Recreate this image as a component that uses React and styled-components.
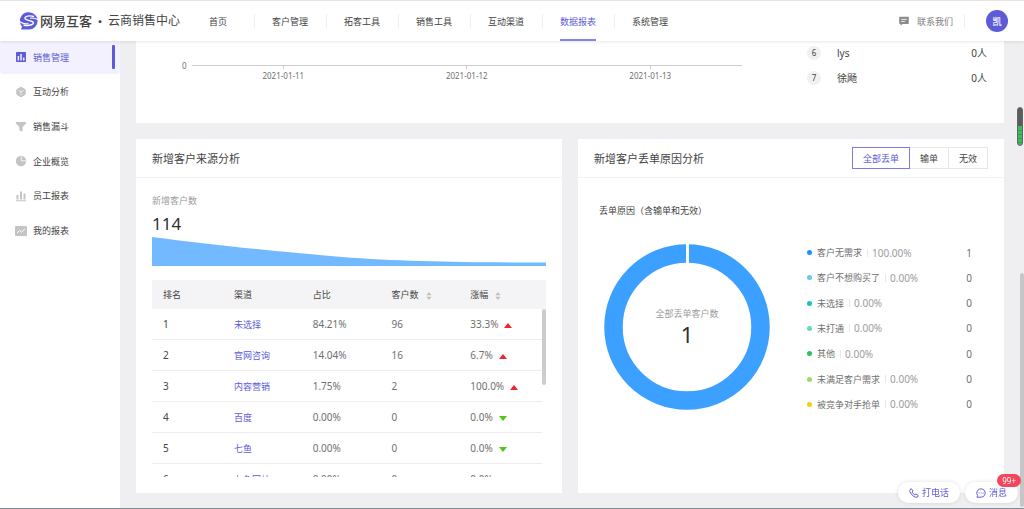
import React from 'react';
import styled, { createGlobalStyle } from 'styled-components';

const colors = {
  primary: '#5d5bd8',
  primaryBg: '#f2f1fd',
  text: '#444444',
  textStrong: '#2f2f2f',
  textMid: '#707070',
  textLight: '#9c9c9c',
  line: '#eeeeee',
  page: '#efeff1',
  blue: '#3ba0ff',
  area: '#73b9ff',
  up: '#f5222d',
  down: '#52c41a',
};

const navItems = ['首页', '客户管理', '拓客工具', '销售工具', '互动渠道', '数据报表', '系统管理'];

const menuItems = [
  { label: '销售管理', icon: 'sales' },
  { label: '互动分析', icon: 'cube' },
  { label: '销售漏斗', icon: 'funnel' },
  { label: '企业概览', icon: 'pie' },
  { label: '员工报表', icon: 'bars' },
  { label: '我的报表', icon: 'trend' },
];

const dates = ['2021-01-11', '2021-01-12', '2021-01-13'];

const ranks = [
  { rank: 6, name: 'lys', value: '0人' },
  { rank: 7, name: '徐飏', value: '0人' },
];

const sources = [
  { name: '未选择', ratio: '84.21%', count: 96, change: '33.3%', up: true },
  { name: '官网咨询', ratio: '14.04%', count: 16, change: '6.7%', up: true },
  { name: '内容营销', ratio: '1.75%', count: 2, change: '100.0%', up: true },
  { name: '百度', ratio: '0.00%', count: 0, change: '0.0%', up: false },
  { name: '七鱼', ratio: '0.00%', count: 0, change: '0.0%', up: false },
  { name: '七鱼网站', ratio: '0.00%', count: 0, change: '0.0%', up: false },
];

const reasons = [
  { name: '客户无需求', ratio: '100.00%', count: 1, color: '#1890ff' },
  { name: '客户不想购买了', ratio: '0.00%', count: 0, color: '#6ac8ea' },
  { name: '未选择', ratio: '0.00%', count: 0, color: '#13c2c2' },
  { name: '未打通', ratio: '0.00%', count: 0, color: '#66d9b0' },
  { name: '其他', ratio: '0.00%', count: 0, color: '#2fc25b' },
  { name: '未满足客户需求', ratio: '0.00%', count: 0, color: '#9ddb67' },
  { name: '被竞争对手抢单', ratio: '0.00%', count: 0, color: '#facc14' },
];

const MenuIcon = ({ name }) => (
  <svg width="12" height="12" viewBox="0 0 12 12" fill="currentColor">
    {name === 'sales' && (
      <path fillRule="evenodd" d="M1.8 1h8.4q.8 0 .8.8v8.4q0 .8-.8.8H1.8q-.8 0-.8-.8V1.8Q1 1 1.8 1zM2.6 5v4.4h1.5V5zM5.3 3v6.4h1.5V3zM8 6.5v2.9h1.5V6.5z" />
    )}
    {name === 'cube' && (
      <>
        <path d="M6 1.2l4.2 2.4v4.8L6 10.800 1.800 8.400V3.600z" stroke="currentColor" strokeLinejoin="round" />
        <path d="M3.400 4.300L6 5.900l2.600-1.600M6 5.900V9" stroke="#fff" fill="none" strokeWidth=".7" />
      </>
    )}
    {name === 'funnel' && <path d="M.8 1h10.4v1.2L7.6 6v4.8L4.4 9.3V6L.8 2.2z" />}
    {name === 'pie' && (
      <>
        <circle cx="6" cy="6" r="5.2" />
        <path d="M6.300 1.200v4.600h4.600" stroke="#fff" fill="none" strokeWidth=".8" />
      </>
    )}
    {name === 'bars' && (
      <path d="M1.500 5h2v4.500h-2zM5 1.500h2v8H5zM8.500 3.500h2v6h-2zM1 10.300h10v.9H1z" />
    )}
    {name === 'trend' && (
      <>
        <rect x="0" y="1" width="12" height="10" rx="1" />
        <path d="M2 8l2.600-2.600 2 1.700L10 3.800" stroke="#fff" fill="none" />
      </>
    )}
  </svg>
);

const Logo = () => (
  <svg width="18" height="18" viewBox="0 0 18 18">
    <path d="M9 .3a8.6 8.6 0 1 1 0 17.2H1.8q-1 0-.6-1l1-1.8A8.6 8.6 0 0 1 9 .3z" fill={colors.primary} />
    <path d="M14 4.500Q9 3 5.500 5 4 6.800 7 7.800l5.500 1.800q2 1.400-.5 2.900Q8 14.300 3.500 13" fill="none" stroke="#fff" strokeWidth="1.400" />
    <path d="M18 7.600Q14 5.400 10 6.200M0 9.800Q4 12.500 8.500 11.600" fill="none" stroke="#fff" strokeWidth="1.100" />
  </svg>
);

const App = () => {
  return (
    <>
      <GlobalStyle />
      <Page>
        <Header>
          <Brand>
            <Logo />
            <BrandName>网易互客</BrandName>
            <BrandDot>·</BrandDot>
            <BrandProduct>云商销售中心</BrandProduct>
          </Brand>
          <Nav>
            {navItems.map((item) => (
              <NavItem key={item}>
                <NavLink href="#" $active={item === '数据报表'}>{item}</NavLink>
              </NavItem>
            ))}
          </Nav>
          <Contact href="#">
            <svg width="10" height="10" viewBox="0 0 10 10">
              <path d="M1 .8h8q.8 0 .8.8v5.600q0 .8-.8.8H3.500L1.600 9.700V8H1q-.8 0-.8-.8V1.600Q.2.8 1 .8z" fill="#8c8c8c" />
              <path d="M2.300 3.400h5.400M2.300 5.500h3.600" stroke="#fff" strokeWidth=".8" />
            </svg>
            联系我们
          </Contact>
          <Avatar>凯</Avatar>
        </Header>

        <Body>
          <Sidebar>
            <Menu>
              {menuItems.map((item, index) => (
                <MenuLink key={item.label} href="#" $active={index === 0}>
                  <MenuIcon name={item.icon} />
                  <span>{item.label}</span>
                </MenuLink>
              ))}
            </Menu>
          </Sidebar>

          <Main>
            <TrendCard>
              <Axis>
                <AxisZero>0</AxisZero>
                <AxisLine>
                  {dates.map((date) => <AxisLabel key={date}>{date}</AxisLabel>)}
                </AxisLine>
              </Axis>
              <RankList>
                {ranks.map((item) => (
                  <RankRow key={item.rank}>
                    <RankBadge>{item.rank}</RankBadge>
                    <RankName>{item.name}</RankName>
                    <span>{item.value}</span>
                  </RankRow>
                ))}
              </RankList>
            </TrendCard>

            <CardRow>
              <Card>
                <CardHeader>
                  <CardTitle>新增客户来源分析</CardTitle>
                </CardHeader>
                <SourceBody>
                  <Caption>新增客户数</Caption>
                  <Total>114</Total>
                  <AreaChart viewBox="0 0 394 29" preserveAspectRatio="none">
                    <path d="M0 0C60 8 130 15 190 20C250 24.500 310 25.500 394 25.500V29H0z" fill={colors.area} />
                  </AreaChart>
                  <TableBox>
                    <Table>
                      <thead>
                        <tr>
                          <Th $width="18%">排名</Th>
                          <Th $width="20%">渠道</Th>
                          <Th $width="20%">占比</Th>
                          <Th $width="20%">客户数<Sorter /></Th>
                          <Th>涨幅<Sorter /></Th>
                        </tr>
                      </thead>
                      <tbody>
                        {sources.map((item, index) => (
                          <tr key={item.name}>
                            <Td $dark>{index + 1}</Td>
                            <Td><SourceLink href="#">{item.name}</SourceLink></Td>
                            <Td>{item.ratio}</Td>
                            <Td>{item.count}</Td>
                            <Td>{item.change}<Arrow $up={item.up} /></Td>
                          </tr>
                        ))}
                      </tbody>
                    </Table>
                    <TableTrack><TableThumb /></TableTrack>
                  </TableBox>
                </SourceBody>
              </Card>

              <Card>
                <CardHeader>
                  <CardTitle>新增客户丢单原因分析</CardTitle>
                  <Tabs>
                    <Tab type="button" $active>全部丢单</Tab>
                    <Tab type="button">输单</Tab>
                    <Tab type="button">无效</Tab>
                  </Tabs>
                </CardHeader>
                <ReasonBody>
                  <ReasonTitle>丢单原因（含输单和无效）</ReasonTitle>
                  <ReasonContent>
                    <Donut>
                      <svg width="166" height="166" viewBox="0 0 166 166">
                        <circle cx="83" cy="83" r="73.500" fill="none" stroke={colors.blue} strokeWidth="18.500" />
                        <path d="M83.500 0v20" stroke="#fff" strokeWidth="3" />
                      </svg>
                      <DonutText>
                        <DonutCaption>全部丢单客户数</DonutCaption>
                        <DonutValue>1</DonutValue>
                      </DonutText>
                    </Donut>
                    <Legend>
                      {reasons.map((item) => (
                        <LegendRow key={item.name}>
                          <Dot $color={item.color} />
                          <span>{item.name}</span>
                          <LegendRatio>{item.ratio}</LegendRatio>
                          <LegendCount>{item.count}</LegendCount>
                        </LegendRow>
                      ))}
                    </Legend>
                  </ReasonContent>
                </ReasonBody>
              </Card>
            </CardRow>
          </Main>
        </Body>

        <PageThumb />
        <Meter />
        <FloatBar>
          <FloatButton type="button">
            <svg width="10" height="10" viewBox="0 0 10 10" fill="none" stroke="currentColor">
              <path d="M1 1.600L2.300.7 4 2.900 3.200 4.200Q4 5.800 5.700 6.800L7 6l2.300 1.600-.9 1.500Q7 9.900 4.400 8.100 1.800 6.300.9 3.600.6 2.400 1 1.600z" strokeLinejoin="round" />
            </svg>
            打电话
          </FloatButton>
          <FloatButton type="button">
            <svg width="10" height="10" viewBox="0 0 10 10" fill="none" stroke="currentColor">
              <path d="M1 9.200h4.200A4.200 4.200 0 1 0 1.500 7.300z" strokeLinejoin="round" />
              <path d="M2.700 5h.9M4.700 5h.9M6.700 5h.9" />
            </svg>
            消息
            <Badge>99+</Badge>
          </FloatButton>
        </FloatBar>
      </Page>
    </>
  );
};

const GlobalStyle = createGlobalStyle`
  * {
    box-sizing: border-box;
  }

  body {
    margin: 0;
    font-family: "Noto Sans", "Noto Sans CJK SC", sans-serif;
    font-size: 9px;
    color: ${colors.text};
    background: ${colors.page};
  }

  a {
    color: inherit;
    text-decoration: none;
  }

  button {
    font-family: inherit;
    cursor: pointer;
  }

  svg {
    flex-shrink: 0;
  }
`;

const Page = styled.div`
  height: 100vh;
  display: flex;
  flex-direction: column;
  overflow: hidden;
  border-bottom: 1px solid #7f8a90;
`;

const Header = styled.header`
  height: 41px;
  flex-shrink: 0;
  padding: 0 16px 0 20px;
  display: flex;
  align-items: center;
  background: #ffffff;
  border-top: 1px solid #e4e4e4;
  box-shadow: 0 1px 3px rgba(0, 0, 0, 0.1);
  z-index: 1;
`;

const Brand = styled.div`
  width: 162px;
  display: flex;
  align-items: center;
  line-height: 18px;
  white-space: nowrap;
`;

const BrandName = styled.span`
  margin-left: 2px;
  font-size: 13px;
  font-weight: 500;
`;

const BrandDot = styled.span`
  width: 16px;
  font-size: 16px;
  font-weight: 700;
  text-align: center;
`;

const BrandProduct = styled.span`
  font-size: 12px;
`;

const Nav = styled.nav`
  height: 100%;
  display: flex;
  align-items: center;
`;

const NavItem = styled.div`
  width: 72px;
  height: 100%;
  display: flex;
  justify-content: center;
  align-items: center;

  & + &::before {
    content: '';
    width: 1px;
    height: 14px;
    margin-right: auto;
    background: ${colors.line};
  }

  & + &::after {
    content: '';
    width: 1px;
    margin-left: auto;
  }
`;

const NavLink = styled.a`
  height: 100%;
  display: flex;
  align-items: center;
  color: ${({ $active }) => ($active ? colors.primary : colors.text)};
  box-shadow: ${({ $active }) => ($active ? 'inset 0 -2px 0 #8584e6' : 'none')};
`;

const Contact = styled.a`
  height: 14px;
  margin-left: auto;
  padding-right: 11px;
  display: flex;
  align-items: center;
  gap: 8px;
  color: #808080;
  border-right: 1px solid ${colors.line};
`;

const Avatar = styled.div`
  width: 22px;
  height: 22px;
  margin-left: 21px;
  display: flex;
  justify-content: center;
  align-items: center;
  border-radius: 50%;
  font-weight: 500;
  color: #ffffff;
  background: ${colors.primary};
`;

const Body = styled.div`
  flex: 1;
  min-height: 0;
  display: flex;
`;

const Sidebar = styled.aside`
  width: 120px;
  flex-shrink: 0;
  background: #ffffff;
`;

const Menu = styled.nav`
  height: 206px;
  display: grid;
  grid-auto-rows: 1fr;
  row-gap: 2px;
`;

const MenuLink = styled.a`
  padding: 0 5px 0 15px;
  display: flex;
  align-items: center;
  gap: 6px;
  border-radius: 3px;
  color: #c4c4c6;

  span {
    color: ${colors.text};
  }

  ${({ $active }) => $active && `
    color: ${colors.primary};
    background: ${colors.primaryBg};

    span {
      color: ${colors.primary};
    }

    &::after {
      content: '';
      width: 3px;
      height: 24px;
      margin-left: auto;
      border-radius: 1px;
      background: ${colors.primary};
    }
  `}
`;

const Main = styled.main`
  flex: 1;
  min-width: 0;
  padding: 0 20px 15px 16px;
  display: flex;
  flex-direction: column;
  gap: 16px;
`;

const TrendCard = styled.section`
  height: 82px;
  flex-shrink: 0;
  padding: 0 17px 0 46px;
  display: flex;
  gap: 65px;
  background: #ffffff;
`;

const Axis = styled.div`
  flex: 1;
  padding-top: 18px;
  display: flex;
  gap: 5px;
  font-size: 8px;
  line-height: 14px;
  color: ${colors.textMid};
`;

const AxisZero = styled.span`
  height: 14px;
`;

const AxisLine = styled.div`
  flex: 1;
  height: 18px;
  margin-top: 6px;
  display: flex;
  border-top: 1px solid #cccccc;
`;

const AxisLabel = styled.div`
  flex: 1;
  display: flex;
  flex-direction: column;
  align-items: center;

  &::before {
    content: '';
    width: 1px;
    height: 3px;
    background: #cccccc;
  }
`;

const RankList = styled.ul`
  width: 180px;
  margin: 0;
  padding: 0;
  list-style: none;
`;

const RankRow = styled.li`
  height: 25px;
  padding-bottom: 2px;
  display: flex;
  align-items: center;
  font-size: 10px;
`;

const RankBadge = styled.span`
  width: 14px;
  height: 14px;
  margin-right: 16px;
  display: flex;
  justify-content: center;
  align-items: center;
  border-radius: 50%;
  font-size: 8px;
  background: #f0f0f2;
`;

const RankName = styled.span`
  flex: 1;
`;

const CardRow = styled.div`
  flex: 1;
  min-height: 0;
  display: grid;
  grid-template-columns: 1fr 1fr;
  gap: 16px;
`;

const Card = styled.section`
  min-width: 0;
  background: #ffffff;
`;

const CardHeader = styled.div`
  height: 39px;
  padding: 0 16px;
  display: flex;
  justify-content: space-between;
  align-items: center;
  border-bottom: 1px solid #f3f3f3;
`;

const CardTitle = styled.h2`
  margin: 0;
  font-size: 11px;
  font-weight: 400;
`;

const SourceBody = styled.div`
  padding: 16px 16px 0;
`;

const Caption = styled.div`
  line-height: 14px;
  color: ${colors.textLight};
`;

const Total = styled.div`
  margin-top: 4px;
  font-size: 17px;
  line-height: 24px;
  color: ${colors.textStrong};
`;

const AreaChart = styled.svg`
  width: 100%;
  height: 29px;
  margin-top: 1px;
  display: block;
`;

const TableBox = styled.div`
  position: relative;
  height: 197px;
  margin-top: 14px;
  overflow: hidden;
`;

const Table = styled.table`
  width: 100%;
  table-layout: fixed;
  border-collapse: separate;
  border-spacing: 0;
`;

const Th = styled.th`
  width: ${({ $width }) => $width || 'auto'};
  height: 29px;
  padding: 0 0 0 11px;
  font-weight: 400;
  text-align: left;
  background: #f4f4f6;
`;

const Td = styled.td`
  height: 31px;
  padding: 0 0 0 11px;
  font-size: 10px;
  color: ${({ $dark }) => ($dark ? colors.text : colors.textMid)};
  border-bottom: 1px solid ${colors.line};
`;

const SourceLink = styled.a`
  font-size: 9px;
  color: ${colors.primary};
`;

const Sorter = () => (
  <SorterIcon width="6" height="8" viewBox="0 0 6 8" fill="#c0c0c0">
    <path d="M3 0l2.600 3.300H.4zM3 8l2.600-3.300H.4z" />
  </SorterIcon>
);

const SorterIcon = styled.svg`
  margin-left: 7px;
  vertical-align: middle;
`;

const Arrow = styled.i`
  display: inline-block;
  margin-left: 6px;
  vertical-align: middle;
  border: 4px solid transparent;
  border-top: ${({ $up }) => ($up ? '0' : `5px solid ${colors.down}`)};
  border-bottom: ${({ $up }) => ($up ? `5px solid ${colors.up}` : '0')};
`;

const TableTrack = styled.div`
  position: absolute;
  top: 29px;
  right: 0;
  bottom: 0;
  width: 4px;
  background: #ffffff;
`;

const TableThumb = styled.div`
  height: 76px;
  border-radius: 2px;
  background: #cdcdcd;
`;

const Tabs = styled.div`
  display: flex;
`;

const Tab = styled.button`
  height: 22px;
  padding: 0 10px;
  font-size: 9px;
  color: ${({ $active }) => ($active ? colors.primary : colors.text)};
  background: #ffffff;
  border: 1px solid ${({ $active }) => ($active ? '#7e7ce2' : '#e6e6e6')};

  & + & {
    border-left: 0;
  }
`;

const ReasonBody = styled.div`
  padding: 26px 32px 0 21px;
`;

const ReasonTitle = styled.h3`
  margin: 0;
  font-size: 9px;
  font-weight: 400;
  line-height: 14px;
`;

const ReasonContent = styled.div`
  margin-top: 22px;
  padding-left: 5px;
  display: flex;
  gap: 37px;
`;

const Donut = styled.div`
  width: 166px;
  height: 166px;
  margin-top: 4px;
  flex-shrink: 0;
  display: grid;

  > * {
    grid-area: 1 / 1;
  }
`;

const DonutText = styled.div`
  display: flex;
  flex-direction: column;
  justify-content: center;
  align-items: center;
`;

const DonutCaption = styled.span`
  line-height: 14px;
  color: ${colors.textLight};
`;

const DonutValue = styled.span`
  font-size: 22px;
  line-height: 26px;
  color: ${colors.textStrong};
`;

const Legend = styled.ul`
  flex: 1;
  height: 177px;
  margin: 0;
  padding: 0;
  display: grid;
  grid-auto-rows: 1fr;
  list-style: none;
`;

const LegendRow = styled.li`
  display: flex;
  align-items: center;
  color: ${colors.textMid};
`;

const Dot = styled.i`
  width: 5px;
  height: 5px;
  margin-right: 5px;
  border-radius: 50%;
  background: ${({ $color }) => $color};
`;

const LegendRatio = styled.span`
  margin-left: 5px;
  padding-left: 4px;
  font-size: 10px;
  line-height: 8px;
  color: ${colors.textLight};
  border-left: 1px solid #e8e8e8;
`;

const LegendCount = styled.span`
  margin-left: auto;
  font-size: 10px;
`;

const PageThumb = styled.div`
  position: fixed;
  right: 0;
  top: 273px;
  bottom: 2px;
  width: 4px;
  border-radius: 2px;
  background: #c6c6c8;
`;

const Meter = styled.div`
  position: fixed;
  top: 107px;
  right: 1px;
  width: 6px;
  height: 39px;
  border: 1px solid #666666;
  border-radius: 3px;
  background:
    repeating-linear-gradient(transparent 0 3px, rgba(0, 0, 0, 0.15) 3px 4px) bottom / 100% 50% no-repeat,
    linear-gradient(#5c5c5c 50%, #3fb860 50%);
`;

const FloatBar = styled.div`
  position: fixed;
  right: 6px;
  bottom: 6px;
  display: flex;
  gap: 5px;
`;

const FloatButton = styled.button`
  position: relative;
  height: 21px;
  padding: 0 11px;
  display: flex;
  align-items: center;
  gap: 3px;
  font-size: 9px;
  color: ${colors.primary};
  background: #ffffff;
  border: 0;
  border-radius: 11px;
  box-shadow: 0 0 4px rgba(0, 0, 0, 0.12);
`;

const Badge = styled.span`
  position: absolute;
  top: -8px;
  right: -3px;
  height: 13px;
  padding: 0 5px;
  border-radius: 7px;
  font-size: 8px;
  line-height: 13px;
  color: #ffffff;
  background: #f5455a;
`;

export default App;
